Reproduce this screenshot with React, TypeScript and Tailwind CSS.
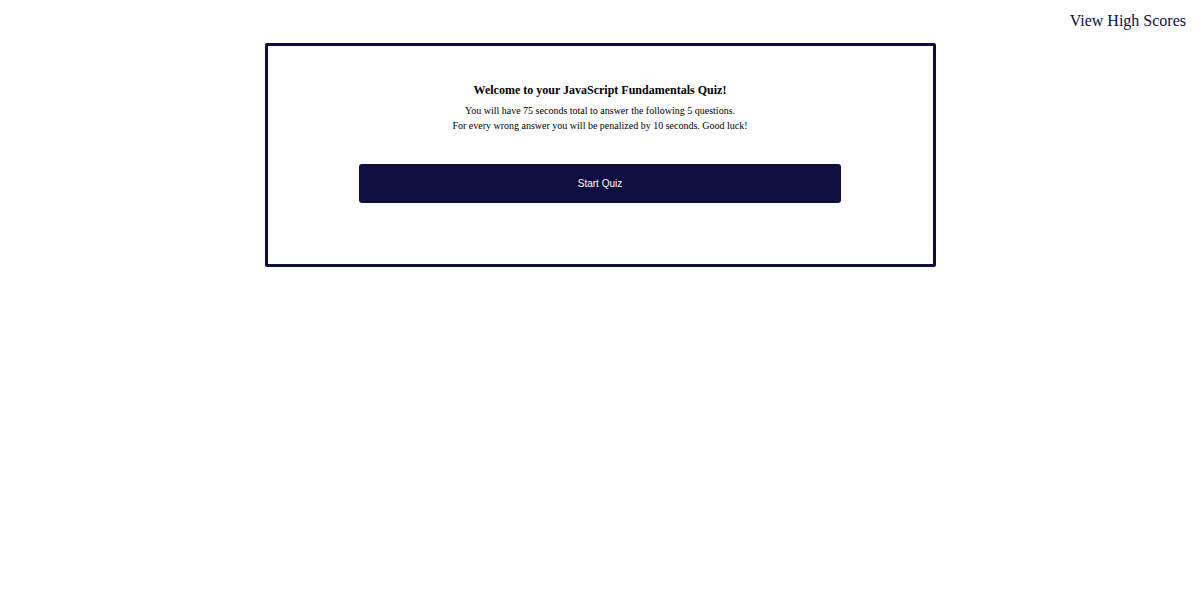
export default function App() {
  return (
    <div className="min-h-screen bg-white font-['Liberation_Serif',serif]">
      <header className="flex justify-end px-[14px] pt-[11px] h-[43px]">
        <a href="#" className="text-[16px] leading-[20px] text-[#0e0e40] no-underline">
          View High Scores
        </a>
      </header>
      <main className="mx-auto w-[671px] h-[224px] border-[3px] border-[#0e0e40] rounded-[2px] flex flex-col items-center pt-[36px]">
        <h1 className="text-[12px] leading-[16px] font-bold text-black">
          Welcome to your JavaScript Fundamentals Quiz!
        </h1>
        <p className="mt-[5px] text-[10px] leading-[15px] text-black text-center">
          You will have 75 seconds total to answer the following 5 questions.
          <br />
          For every wrong answer you will be penalized by 10 seconds. Good luck!
        </p>
        <button className="mt-[31px] w-[482px] h-[39px] rounded-[3px] bg-[#0e0e40] text-white text-[10px] font-['Liberation_Sans',Arial,sans-serif] cursor-pointer">
          Start Quiz
        </button>
      </main>
    </div>
  );
}
